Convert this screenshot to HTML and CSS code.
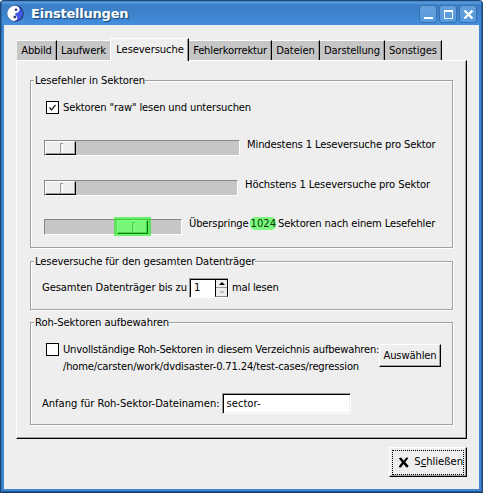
FILE: index.html
```
<!DOCTYPE html>
<html lang="de">
<head>
<meta charset="utf-8">
<title>Einstellungen</title>
<link rel="stylesheet" href="styles.css">
</head>
<body>
<div class="window">
  <header class="titlebar">
    <svg class="logo" width="17" height="17" viewBox="0 0 16 16">
      <circle cx="8" cy="8" r="7.300" fill="#4458e8" stroke="#26346e" stroke-width="1"/>
      <path d="M9 .9A7.2 7.2 0 0 0 6 15C9 15 10 13.500 9.600 11.500 9.200 9.600 7 9.500 8 7.500 11 7.500 12.500 5 11.500 3 11 1.800 10 1 9 .9Z" fill="#fff"/>
      <circle cx="8.500" cy="4.500" r="1.200" fill="#26307a"/>
      <circle cx="7.400" cy="11.300" r="1.400" fill="#3a3f6c"/>
    </svg>
    <h1>Einstellungen</h1>
    <div class="controls">
      <span class="control"><svg width="16" height="16" viewBox="0 0 16 16"><path d="M4 12h9" stroke="#fff" stroke-width="2"/></svg></span>
      <span class="control"><svg width="16" height="16" viewBox="0 0 16 16"><path d="M4 5.500h8.500V12.500H4.500V5" fill="none" stroke="#fff"/><path d="M4 5h9" stroke="#fff" stroke-width="2"/></svg></span>
      <span class="control"><svg width="16" height="16" viewBox="0 0 16 16"><path d="M4.500 4.500l8 8M12.500 4.500l-8 8" stroke="#fff" stroke-width="2.300"/></svg></span>
    </div>
  </header>
  <main class="content">
    <nav class="tabs">
      <span class="tab w40 s14">Abbild</span>
      <span class="tab w53 s5 last-before">Laufwerk</span>
      <span class="tab active s10">Leseversuche</span>
      <span class="tab w83 s17">Fehlerkorrektur</span>
      <span class="tab w48 s5">Dateien</span>
      <span class="tab w65 s17">Darstellung</span>
      <span class="tab w57 s5">Sonstiges</span>
    </nav>
    <div class="panel">
      <section class="group errors">
        <h2 class="s10">Lesefehler in Sektoren</h2>
        <div class="check-row"><span class="checkbox"><svg width="11" height="11" viewBox="0 0 11 11"><path d="M2.500 5.500L4.500 8 8.500 3" fill="none" stroke="#222" stroke-width="1.300"/></svg></span><span class="s15">Sektoren "raw" lesen und untersuchen</span></div>
        <div class="slider-row"><div class="slider long"><i class="thumb"></i></div><span class="s14">Mindestens 1 Leseversuche pro Sektor</span></div>
        <div class="slider-row"><div class="slider medium"><i class="thumb"></i></div><span class="s11">Höchstens 1 Leseversuche pro Sektor</span></div>
        <div class="slider-row third"><div class="slider short"><i class="thumb"></i><i class="glow"></i></div><span class="s15">Überspringe</span><mark>1024</mark><span class="s15">Sektoren nach einem Lesefehler</span></div>
      </section>
      <section class="group medium-reads">
        <h2 class="s12">Leseversuche für den gesamten Datenträger</h2>
        <div class="spin-row"><span class="s11">Gesamten Datenträger bis zu</span>
          <div class="spin"><span class="value">1</span><div class="arrows"><span><i class="up"></i></span><span><i class="down"></i></span></div></div>
          <span class="s17">mal lesen</span></div>
      </section>
      <section class="group raw">
        <h2 class="s8">Roh-Sektoren aufbewahren</h2>
        <div class="raw-row">
          <span class="checkbox"></span>
          <div class="raw-text"><div class="s20">Unvollständige Roh-Sektoren in diesem Verzeichnis aufbewahren:</div><div class="s18">/home/carsten/work/dvdisaster-0.71.24/test-cases/regression</div></div>
          <div class="button choose s14">Auswählen</div>
        </div>
        <div class="entry-row"><span class="s3">Anfang für Roh-Sektor-Dateinamen:</span><div class="entry">sector-</div></div>
      </section>
    </div>
    <footer>
      <div class="button close"><div class="focus"><svg width="13" height="13" viewBox="0 0 13 13"><path d="M1 2L3 .8 4.500 1.500 6.500 4.500 9.500 .8 11.500 1 11.300 2.500 8.300 6 12.300 10.500 11 12.300 9.500 12 6.200 8.300 3.500 12.300 1 12 1.300 10.500 4.500 6.300Z"/></svg><span>S<u>c</u>hließen</span></div></div>
    </footer>
  </main>
</div>
</body>
</html>
```
FILE: styles.css
```
* { box-sizing: border-box; }
body { margin: 0; background: #fff; color: #000; font: 10px/12px "DejaVu Sans", sans-serif; white-space: nowrap; }
h1, h2 { margin: 0; }
.window { width: 483px; height: 493px; background: #3d86d4; border: 1px solid #1f4672; border-bottom-color: #173b64; border-radius: 4px 4px 0 0; padding: 0 2px 2px; box-shadow: inset 1px 0 #2e6cb3, inset -1px 0 #2c64a4, inset 0 -1px #235894; }
.titlebar { height: 24px; margin: 0 -1px; display: flex; align-items: center; padding-left: 5px; background: linear-gradient(#306fb4 0, #5aa0e4 1px, #3b7fc8 4px, #3c82cb 12px, #438fdd 24px); }
.logo { margin-top: 1px; }
h1 { flex: 1; margin-left: 7px; padding-top: 1px; font: bold 13px/16px "DejaVu Sans", sans-serif; letter-spacing: -.22px; color: #fff; text-shadow: 1px 1px 1px #17446e; }
.controls { display: flex; gap: 2px; margin-right: 4px; padding-top: 1px; }
.control { width: 18px; height: 18px; border: 1px solid #376fae; border-radius: 3px; background: linear-gradient(#659fda, #559ae1); }
.control svg { display: block; }
.content { height: 464px; margin: 0 1px; background: #eee; padding: 13px 11px 0 12px; }
.tabs { height: 22px; display: flex; align-items: flex-end; padding-left: 1px; }
.tab { height: 20px; border-top: 1px solid #fff; border-right: 1px solid #000; box-shadow: inset -1px 0 #999; background: #c6c6c6; text-align: center; line-height: 20px; }
.w40 { width: 40px; }
.w53 { width: 53px; }
.w83 { width: 83px; }
.w48 { width: 48px; }
.w65 { width: 65px; }
.w57 { width: 57px; }
.last-before { border-right: 0; box-shadow: none; }
.tab.active { position: relative; z-index: 1; width: 79px; height: 23px; margin-bottom: -1px; padding-left: 1px; line-height: 21px; background: #eee; border-left: 1px solid #fff; }
.panel { width: 451px; height: 379px; border: 1px solid; border-color: #fff #000 #000 #fff; box-shadow: inset -1px -1px #a0a0a0; padding: 19px 13px 0; }
.group { width: 423px; border: 1px solid #a0a0a0; box-shadow: 1px 1px #fff, inset 1px 1px #fff; padding: 0 0 0 13px; }
h2 { width: max-content; height: 12px; margin: -7px 0 0 -10px; padding: 0 0 0 1px; background: #eee; font: 10px/13px "DejaVu Sans", sans-serif; }
.errors { height: 168px; }
.check-row { display: flex; align-items: center; height: 13px; margin: 15px 0 0 2px; }
.checkbox { width: 13px; height: 13px; border: 1px solid #000; background: #fff; margin-right: 4px; flex: none; }
.checkbox svg { display: block; }
.slider-row { display: flex; height: 17px; margin-top: 23px; line-height: 12px; }
.slider-row > span { margin-top: -1px; }
.check-row + .slider-row { margin-top: 26px; }
.slider-row.third { margin-top: 22px; }
.slider { position: relative; height: 16px; background: #c6c6c6; border: 1px solid; border-color: #888 #fff #fff #888; flex: none; }
.long { width: 196px; margin-right: 7px; }
.medium { width: 194px; margin-right: 7px; }
.short { width: 138px; margin-right: 7px; padding-left: 72px; }
.thumb { display: block; width: 31px; height: 14px; background: #eee; border: 1px solid; border-color: #fff #000 #000 #fff; box-shadow: inset -1px -1px #a0a0a0; padding: 1px 0 0 14px; }
.thumb::before { content: ""; display: block; width: 2px; height: 9px; border: 1px solid #999; border-width: 1px 0 0 1px; box-shadow: inset -1px 0 #fff; }
.glow { position: absolute; left: 69px; top: -3px; width: 37px; height: 19px; background: rgba(0, 255, 0, .5); box-shadow: inset 0 0 1px 2px rgba(80, 230, 80, .4); }
mark { height: 13px; margin: -2px 2px 0 1px; padding: 1px 0 0 1px; background: #7bf77b; border-radius: 5px; color: #063806; }
.medium-reads { height: 49px; margin-top: 13px; }
.spin-row { display: flex; align-items: center; height: 20px; margin: 11px 0 0 -2px; }
.spin { width: 40px; height: 20px; display: flex; margin: 0 3px 0 2px; border: 1px solid; border-color: #999 #fff #fff #999; }
.value { width: 26px; border: 1px solid #000; border-width: 1px 0 0 1px; background: #fff; padding: 2px 0 0 3px; }
.arrows { width: 13px; border: 1px solid #000; border-bottom-color: #888; display: grid; grid-template-rows: 1fr 1fr; }
.arrows span { display: grid; place-items: center; background: #eee; border-bottom: 1px solid #999; }
.arrows span + span { border-bottom: 0; }
.up, .down { border: 3px solid transparent; border-top: 0; border-bottom: 3px solid #000; }
.down { border-top: 3px solid #bbb; border-bottom: 0; }
.raw { height: 103px; margin-top: 12px; }
.raw-row { display: flex; height: 32px; margin: 15px 0 0 2px; }
.raw-text { width: 316px; line-height: 17px; margin-top: -2px; }
.button { display: flex; align-items: center; justify-content: center; border: 1px solid; border-color: #fff #000 #000 #fff; box-shadow: inset -1px -1px #a0a0a0; background: #eee; }
.choose { width: 62px; height: 23px; margin-top: 1px; flex: none; }
.entry-row { display: flex; align-items: center; height: 21px; margin: 18px 0 0 -2px; }
.entry { width: 129px; height: 21px; margin-left: 2px; padding: 4px 0 0 4px; background: #fff; border: 1px solid; border-color: #999 #fff #fff #999; box-shadow: inset 1px 1px #000, inset -1px -1px #eee; }
footer { display: flex; justify-content: flex-end; padding-top: 8px; }
.close { width: 78px; height: 30px; margin-right: 1px; padding: 2px; }
.focus { width: 72px; height: 25px; display: flex; align-items: center; padding-left: 5px; border: 1px dotted #000; }
.focus span { margin-left: 5px; }
u { text-underline-offset: 1px; }
.s3 { letter-spacing: -.03px; }
.s5 { letter-spacing: -.06px; }
.s8 { letter-spacing: -.08px; }
.s10 { letter-spacing: -.1px; }
.s11 { letter-spacing: -.11px; }
.s12 { letter-spacing: -.12px; }
.s14 { letter-spacing: -.14px; }
.s15 { letter-spacing: -.15px; }
.s17 { letter-spacing: -.18px; }
.s18 { letter-spacing: -.178px; }
.s20 { letter-spacing: -.2px; }
```
